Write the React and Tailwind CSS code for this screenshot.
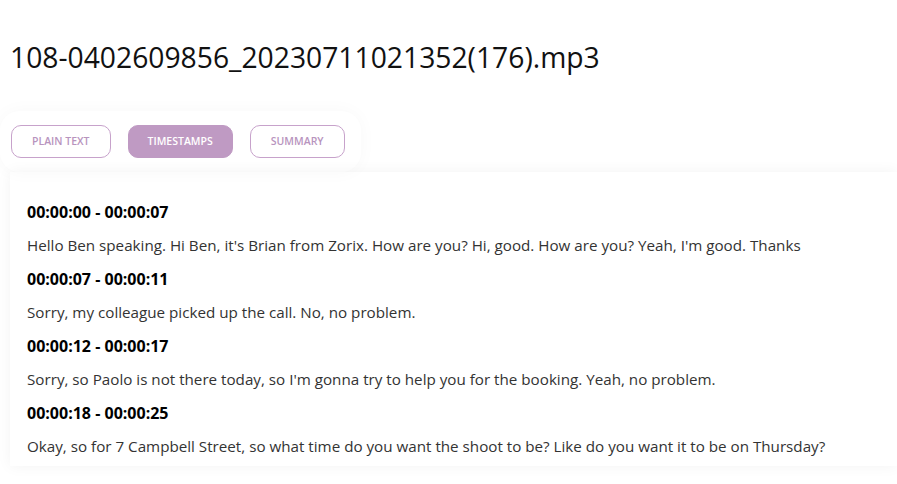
import React from "react";

const segments = [
  {
    time: "00:00:00 - 00:00:07",
    text: "Hello Ben speaking. Hi Ben, it's Brian from Zorix. How are you? Hi, good. How are you? Yeah, I'm good. Thanks",
  },
  { time: "00:00:07 - 00:00:11", text: "Sorry, my colleague picked up the call. No, no problem." },
  {
    time: "00:00:12 - 00:00:17",
    text: "Sorry, so Paolo is not there today, so I'm gonna try to help you for the booking. Yeah, no problem.",
  },
  {
    time: "00:00:18 - 00:00:25",
    text: "Okay, so for 7 Campbell Street, so what time do you want the shoot to be? Like do you want it to be on Thursday?",
  },
];

const tabs = ["Plain Text", "Timestamps", "Summary"];

export default function App() {
  const active = "Timestamps";

  return (
    <div className="h-[484px] overflow-hidden bg-white font-['Open_Sans','Noto_Sans',sans-serif] pl-[10px]">
      {/* Title */}
      <h1 className="pt-[39px] text-[28.25px] leading-[36px] text-[#111]">
        108-0402609856_20230711021352(176).mp3
      </h1>

      {/* Tabs */}
      <div className="mt-[36px] -ml-[10px] inline-flex gap-[17px] pl-[11px] pr-[16px] pt-[14px] pb-[14px] rounded-[20px] shadow-[0_0_18px_rgba(0,0,0,0.03)]">
        {tabs.map((t) => (
          <button
            key={t}
            className={
              "h-[33px] rounded-[10px] border text-[10.5px] font-semibold uppercase " +
              (t === active
                ? "bg-[#bf9ac3] border-[#bf9ac3] text-white px-[19px]"
                : "bg-white border-[#c7a2cb] text-[#b894be] px-[20px]")
            }
          >
            {t}
          </button>
        ))}
      </div>

      {/* Transcript card */}
      <div className="h-[294px] bg-white pl-[17px] pt-[30px] shadow-[0_0_14px_rgba(0,0,0,0.05)]">
        {segments.map((s) => (
          <div key={s.time}>
            <p className="text-[16px] leading-[21px] font-bold text-black mb-[12px]">{s.time}</p>
            <p className="text-[15.2px] leading-[21px] text-[#333] mb-[13px]">{s.text}</p>
          </div>
        ))}
      </div>
    </div>
  );
}
